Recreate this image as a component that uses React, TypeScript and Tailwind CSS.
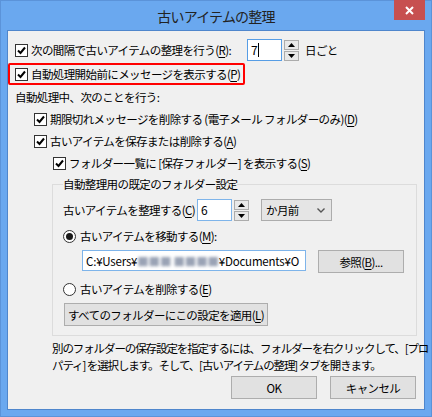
import type { ReactNode } from "react"

const font = "font-['Noto_Sans_CJK_JP','Noto_Sans',sans-serif]"

function Check() {
  return (
    <span className="flex h-[13px] w-[13px] shrink-0 items-center justify-center border border-[#333] bg-white">
      <svg width="11" height="11" viewBox="0 0 11 11">
        <path d="M2 5.5 L4.5 8 L9 2.5" fill="none" stroke="#000" strokeWidth="2" />
      </svg>
    </span>
  )
}

function Radio({ on }: { on?: boolean }) {
  return (
    <span className="flex h-[13px] w-[13px] shrink-0 items-center justify-center rounded-full border border-[#333] bg-white">
      {on && <span className="h-[7px] w-[7px] rounded-full bg-[#1a1a1a]" />}
    </span>
  )
}

function Spin() {
  return (
    <div className="flex h-[21px] w-[15px] flex-col gap-px">
      <div className="flex flex-1 items-center justify-center border border-[#acacac] bg-[#e8e8e8]">
        <svg width="7" height="4" viewBox="0 0 7 4"><path d="M0 4 L3.5 0 L7 4 Z" fill="#000" /></svg>
      </div>
      <div className="flex flex-1 items-center justify-center border border-[#acacac] bg-[#e8e8e8]">
        <svg width="7" height="4" viewBox="0 0 7 4"><path d="M0 0 L3.5 4 L7 0 Z" fill="#000" /></svg>
      </div>
    </div>
  )
}

function Btn({ children, className = "" }: { children: ReactNode; className?: string }) {
  return (
    <div className={"flex h-[23px] items-center justify-center border border-[#adadad] bg-[#e1e1e1] " + className}>
      {children}
    </div>
  )
}

const U = ({ c }: { c: string }) => <span className="underline underline-offset-[2px]">{c}</span>

export default function App() {
  return (
    <div className={"flex h-[417px] w-[432px] flex-col border border-[#5b93d9] bg-[#6aa8ef] px-[6px] pb-[6px] text-[11.5px] leading-[16px] tracking-[-0.6px] text-black " + font}>
      <div className="flex h-[29px] shrink-0">
        <div className="flex-1 pl-[31px] pt-[5px] text-center text-[14px] leading-[20px] tracking-[-0.8px] text-[#222]">
          古いアイテムの整理
        </div>
        <div className="-mt-px flex h-[20px] w-[31px] items-center justify-center bg-[#c75050]">
          <svg width="9" height="9" viewBox="0 0 9 9">
            <path d="M1 1 L8 8 M8 1 L1 8" stroke="#fff" strokeWidth="2" />
          </svg>
        </div>
      </div>

      <div className="flex flex-1 flex-col border border-[#4f86cc] bg-[#f0f0f0] px-[7px] pt-[7px]">
        {/* row 1 */}
        <div className="flex h-[24px] items-center">
          <div className="flex w-[232px] items-center gap-[3px]">
            <Check />
            <span>次の間隔で古いアイテムの整理を行う(<U c="R" />):</span>
          </div>
          <div className="flex h-[22px] w-[35px] items-center border border-[#569de5] bg-white pl-[3px] text-[12px]">
            7<span className="ml-px h-[14px] w-px bg-black" />
          </div>
          <div className="ml-[2px]"><Spin /></div>
          <span className="ml-[6px]">日ごと</span>
        </div>

        {/* row 2 highlighted */}
        <div className="-ml-[7px] mt-px flex h-[22px] w-[237px] items-center gap-[3px] rounded-[2px] border-2 border-[#f00] pl-[5px]">
          <Check />
          <span>自動処理開始前にメッセージを表示する(<U c="P" />)</span>
        </div>

        <div className="mt-[2px] flex h-[20px] items-center">自動処理中、次のことを行う:</div>

        <div className="mt-px flex h-[22px] items-center gap-[3px] pl-[19px]">
          <Check />
          <span>期限切れメッセージを削除する (電子メール フォルダーのみ)(<U c="D" />)</span>
        </div>
        <div className="flex h-[22px] items-center gap-[3px] pl-[19px]">
          <Check />
          <span>古いアイテムを保存または削除する(<U c="A" />)</span>
        </div>
        <div className="flex h-[22px] items-center gap-[3px] pl-[38px]">
          <Check />
          <span>フォルダー一覧に [保存フォルダー] を表示する(<U c="S" />)</span>
        </div>

        <fieldset className="ml-[37px] mt-px h-[161px] border border-[#dcdcdc] pl-[10px] pr-[10px]">
          <legend className="px-0 leading-[18px]">自動整理用の既定のフォルダー設定</legend>

          <div className="mt-[6px] flex h-[22px] items-center">
            <span className="w-[134px]">古いアイテムを整理する(<U c="C" />)</span>
            <div className="flex h-[22px] w-[35px] items-center border border-[#7eb4ea] bg-white pl-[3px] text-[12px]">6</div>
            <div className="ml-[2px]"><Spin /></div>
            <div className="ml-[12px] flex h-[22px] w-[71px] items-center justify-between border border-[#acacac] bg-[#e5e5e5] pl-[4px] pr-[6px]">
              <span>か月前</span>
              <svg width="8" height="5" viewBox="0 0 8 5">
                <path d="M0.5 0.5 L4 4 L7.5 0.5" fill="none" stroke="#555" strokeWidth="1.4" />
              </svg>
            </div>
          </div>

          <div className="mt-[4px] flex h-[22px] items-center gap-[4px]">
            <Radio on />
            <span>古いアイテムを移動する(<U c="M" />):</span>
          </div>

          <div className="mt-[3px] flex h-[23px] items-start pl-[19px]">
            <div className="flex h-[21px] w-[224px] items-center overflow-hidden whitespace-nowrap border border-[#7eb4ea] bg-white pl-[3px] tracking-[-0.2px]">
              C:¥Users¥<span className="text-[#9aa3b5] blur-[1.5px]">■■■ ■■■■</span>¥Documents¥O
            </div>
            <Btn className="ml-[12px] w-[86px]">参照(<U c="B" />)...</Btn>
          </div>

          <div className="mt-[5px] flex h-[22px] items-center gap-[4px]">
            <Radio />
            <span>古いアイテムを削除する(<U c="E" />)</span>
          </div>

          <Btn className="ml-px mt-[3px] w-[204px]">すべてのフォルダーにこの設定を適用(<U c="L" />)</Btn>
        </fieldset>

        <p className="ml-[37px] mt-[4px] whitespace-nowrap leading-[17px] tracking-[-1.1px]">
          別のフォルダーの保存設定を指定するには、フォルダーを右クリックして、[プロ
          <br />
          パティ] を選択します。そして、[古いアイテムの整理] タブを開きます。
        </p>

        <div className="mt-[2px] flex justify-end gap-[13px] pr-px">
          <Btn className="w-[86px] border-[#3c7fb1]">OK</Btn>
          <Btn className="w-[86px]">キャンセル</Btn>
        </div>
      </div>
    </div>
  )
}
